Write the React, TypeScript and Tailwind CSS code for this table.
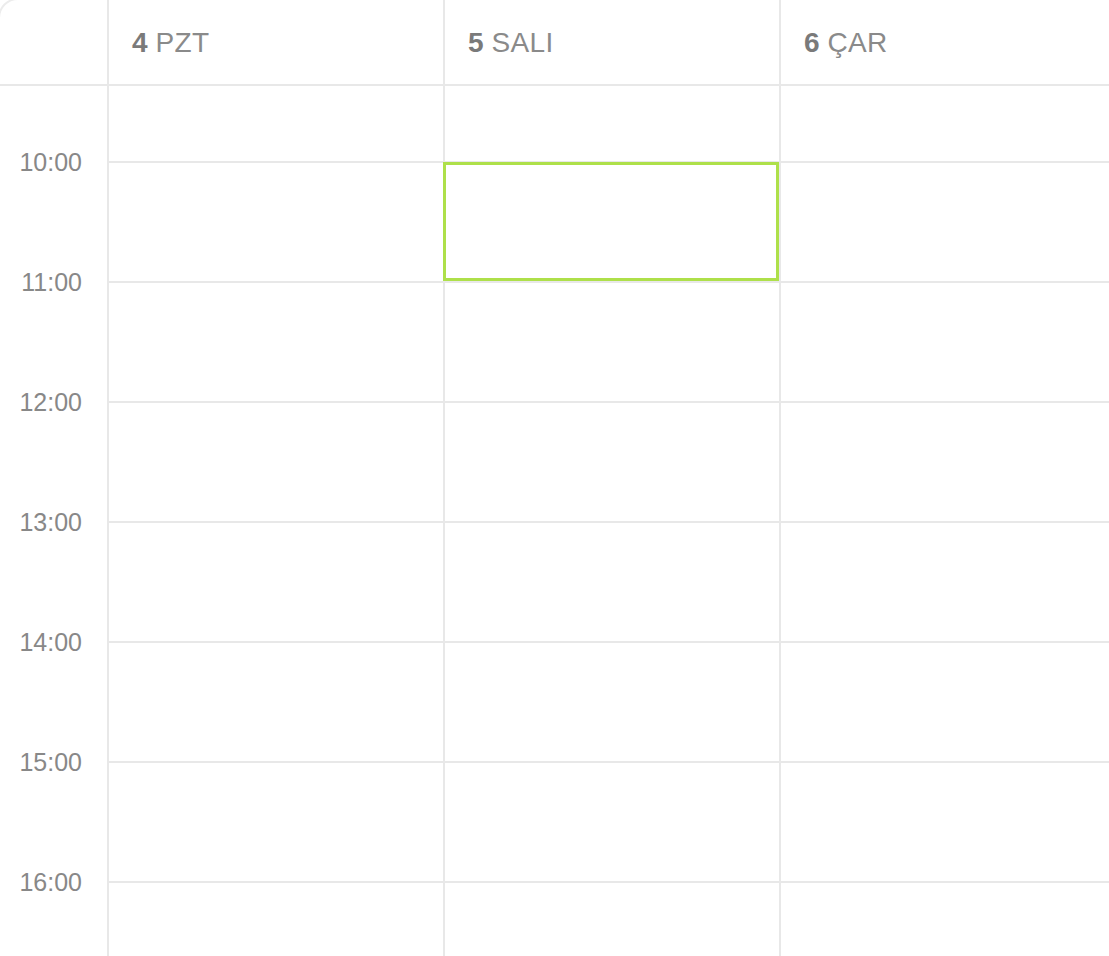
import React from "react"

const days = [
  { num: "4", name: "PZT" },
  { num: "5", name: "SALI" },
  { num: "6", name: "ÇAR" },
]

const hours = ["10:00", "11:00", "12:00", "13:00", "14:00", "15:00", "16:00"]

export default function App() {
  return (
    <div className="w-[1109px] h-[956px] overflow-hidden bg-white" style={{ fontFamily: "'Liberation Sans', Arial, sans-serif" }}>
      <div className="-ml-[2px] -mt-[2px] w-[1200px] border-2 border-[#ececec] rounded-tl-[20px] bg-white">
        {/* Header */}
        <div className="flex h-[86px] border-b-2 border-[#e8e8e8]">
          <div className="w-[107px] shrink-0" />
          {days.map((d) => (
            <div key={d.num} className="w-[336px] shrink-0 border-l-2 border-[#e8e8e8] flex items-center pl-[23px] pt-[1px] text-[28px] text-[#8a8a8a]">
              <span className="font-bold text-[#7a7a7a]">{d.num}</span>
              <span className="ml-[8px] tracking-[0.3px]">{d.name}</span>
            </div>
          ))}
        </div>

        {/* Body */}
        <div className="flex">
          {/* Time column */}
          <div className="w-[107px] shrink-0">
            <div className="h-[75px]" />
            {hours.map((h) => (
              <div key={h} className="h-[120px] relative">
                <span className="absolute right-[25px] top-[1px] -translate-y-1/2 text-[25px] leading-none text-[#888888]">{h}</span>
              </div>
            ))}
          </div>

          {days.map((d, i) => (
            <div key={d.num} className="w-[336px] shrink-0 border-l-2 border-[#e8e8e8]">
              <div className="h-[75px]" />
              {hours.map((h, j) => (
                <div key={h} className="h-[120px] border-t-2 border-[#e8e8e8] relative">
                  {i === 1 && j === 0 && (
                    <div className="absolute -left-[2px] right-0 top-[-1px] h-[119px] border-[3px] border-[#aee04a]" />
                  )}
                </div>
              ))}
            </div>
          ))}
        </div>
      </div>
    </div>
  )
}
